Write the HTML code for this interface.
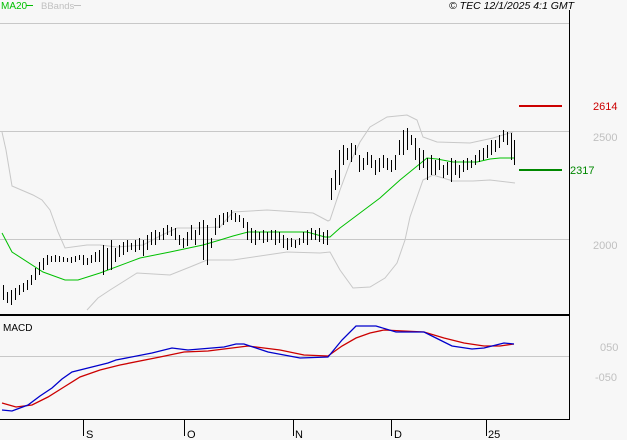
<!DOCTYPE html>
<html><head><meta charset="utf-8"><style>
html,body{margin:0;padding:0;background:#f7f7f7;}
svg{display:block;font-family:"Liberation Sans",sans-serif;}
</style></head><body>
<svg width="627" height="440" viewBox="0 0 627 440" xmlns="http://www.w3.org/2000/svg">
<rect width="627" height="440" fill="#f7f7f7"/>
<g stroke="#c8c8c8" stroke-width="1">
<line x1="0" y1="23.5" x2="569" y2="23.5"/>
<line x1="0" y1="131.5" x2="569" y2="131.5"/>
<line x1="0" y1="239.5" x2="569" y2="239.5"/>
<line x1="0" y1="356.5" x2="569" y2="356.5"/>
</g>
<line x1="569.5" y1="10" x2="569.5" y2="420" stroke="#000"/>
<line x1="0" y1="315" x2="570" y2="315" stroke="#000" stroke-width="2"/>
<line x1="0" y1="419.5" x2="570" y2="419.5" stroke="#000"/>
<g stroke="#000"><line x1="83.5" y1="420" x2="83.5" y2="436"/><line x1="184.5" y1="420" x2="184.5" y2="436"/><line x1="293.5" y1="420" x2="293.5" y2="436"/><line x1="391.5" y1="420" x2="391.5" y2="436"/><line x1="486.5" y1="420" x2="486.5" y2="436"/></g>
<g font-size="11" fill="#000"><text x="86" y="438">S</text><text x="187" y="438">O</text><text x="295" y="438">N</text><text x="394" y="438">D</text><text x="488" y="438">25</text></g>
<text x="1" y="9" font-size="10" fill="#00c000">MA20</text>
<line x1="26" y1="5.5" x2="33" y2="5.5" stroke="#00c000"/>
<text x="41" y="9" font-size="9.5" fill="#c0c0c0">BBands</text>
<line x1="74" y1="5.5" x2="81" y2="5.5" stroke="#c0c0c0"/>
<text x="449" y="9" font-size="10.5" font-style="italic" fill="#000">© TEC 12/1/2025 4:1 GMT</text>
<text x="3" y="331" font-size="10" fill="#000">MACD</text>
<g font-size="11" fill="#c0c0c0"><text x="593" y="141">2500</text><text x="593" y="249">2000</text><text x="600" y="351">050</text><text x="595" y="381">-050</text></g>
<text x="593" y="110" font-size="11" fill="#cc0000">2614</text>
<text x="570" y="174" font-size="11" fill="#008800">2317</text>
<line x1="519" y1="106" x2="562" y2="106" stroke="#cc0000" stroke-width="2"/>
<line x1="519" y1="170" x2="562" y2="170" stroke="#008800" stroke-width="2"/>
<polyline fill="none" stroke="#c8c8c8" points="2,132 6,150 12,186 33,195 42,200 50,210 58,232 65,248 87,245 100,245 117,247 143,245 160,236 177,228 197,228 220,227 233,212 267,210 313,213 328,221 330,220 340,190 350,163 360,142 370,127 387,117 407,115 417,120 423,137 437,142 470,143 493,138 513,132"/>
<polyline fill="none" stroke="#c8c8c8" points="87,310 98,298 110,290 137,273 170,275 190,267 207,260 233,260 287,252 320,253 330,252 340,270 353,288 370,287 385,278 397,263 405,240 410,217 423,180 433,175 453,181 473,181 490,180 515,183"/>
<polyline fill="none" stroke="#00c000" points="2,233 12,252 43,272 65,280 78,280 100,273 140,258 170,252 203,245 220,240 233,236 248,232 290,232 307,232 325,237 330,237 340,228 360,213 380,198 400,180 427,158 437,159 453,162 477,162 490,159 500,158 515,158"/>
<path transform="translate(0.5,0)" stroke="#000" stroke-width="1" fill="none" d="M3,285V300M7,292V303M11,290V305M15,288V300M19,285V295M23,283V292M27,280V290M31,275V285M35,268V280M39,262V275M43,258V270M47,255V265M51,256V262M55,255V262M59,256V262M63,257V262M67,258V262M71,257V263M75,256V262M79,255V260M83,255V265M87,258V265M91,255V263M95,252V262M99,250V262M103,245V275M107,248V270M111,240V270M115,248V262M119,245V257M123,242V255M127,240V252M131,243V250M135,240V252M139,238V250M143,240V256M147,235V250M151,232V245M155,230V245M159,232V240M163,228V240M167,225V235M171,227V236M175,228V240M179,235V245M183,238V248M187,232V246M191,225V240M195,230V245M199,222V235M203,220V260M207,225V265M211,238V248M215,218V235M219,215V228M223,213V225M227,212V222M231,210V220M235,213V222M239,215V222M243,218V228M247,222V240M251,228V243M255,230V245M259,232V240M263,230V243M267,232V242M271,230V240M275,230V245M279,232V243M283,235V248M287,238V250M291,238V247M295,240V248M299,238V245M303,232V243M307,230V245M311,228V240M315,230V240M319,228V242M323,232V244M327,230V245M331,178V200M335,170V190M339,150V185M343,145V165M347,148V160M351,143V162M355,145V155M359,155V172M363,158V170M367,152V165M371,155V168M375,160V175M379,158V172M383,155V168M387,158V170M391,160V172M395,155V170M399,140V155M403,130V155M407,128V150M411,135V145M415,138V160M419,148V170M423,150V168M427,158V180M431,155V175M435,160V175M439,158V170M443,165V178M447,162V175M451,158V182M455,160V175M459,165V178M463,160V172M467,158V170M471,160V168M475,155V165M479,150V162M483,148V160M487,145V158M491,140V155M495,140V152M499,135V148M503,130V142M507,132V145M511,133V160M514,140V165"/>
<polyline fill="none" stroke="#cc0000" stroke-width="1.3" points="2,403 16,407 32,405 48,397 64,387 80,377 100,370 120,365 160,357 184,352 208,351 248,346 280,350 304,355 328,356 342,346 356,338 370,333 384,330 424,332 444,338 464,343 484,346 500,346 514,344"/>
<polyline fill="none" stroke="#0000cc" stroke-width="1.3" points="2,410 12,411 28,405 40,396 52,388 62,379 72,372 96,366 108,363 116,360 152,353 172,348 188,350 224,347 236,344 244,344 268,352 300,358 328,357 342,340 356,326 376,326 396,332 424,332 440,340 452,346 472,349 484,348 504,343 514,344"/>
</svg>
</body></html>
